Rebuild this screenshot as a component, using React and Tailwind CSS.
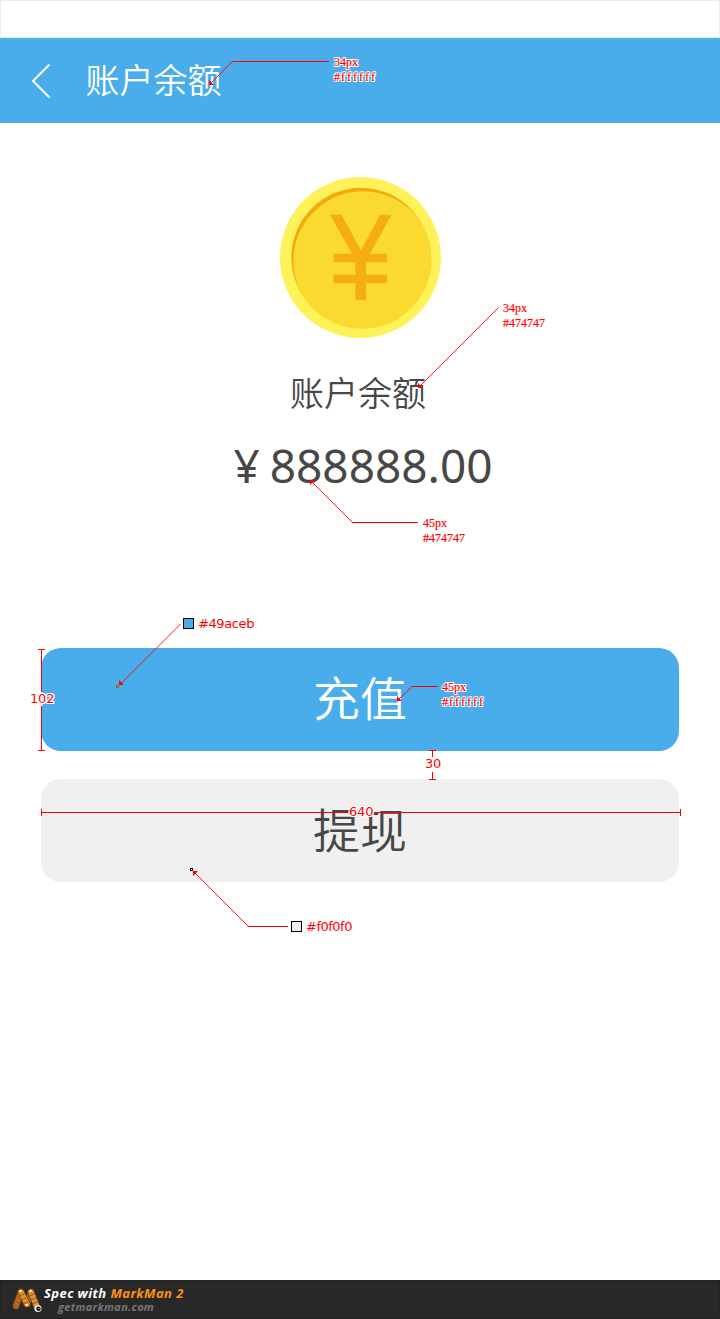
const cjk = "font-['Noto_Sans_CJK_SC',sans-serif] font-[350]";
const note = "absolute whitespace-pre font-['Liberation_Serif',serif] text-[12px] leading-[15px] text-[#ff0000] [-webkit-text-stroke:0.2px_#ff0000]";
const measure = "absolute whitespace-pre font-['DejaVu_Sans',sans-serif] text-[13px] leading-[15px] text-[#ff0000]";
const halo =
  '[text-shadow:1px_0_#fff,-1px_0_#fff,0_1px_#fff,0_-1px_#fff,1px_1px_#fff,-1px_-1px_#fff,1px_-1px_#fff,-1px_1px_#fff]';

function Coin() {
  return (
    <svg className="ml-[2px] h-[162px] w-[162px]" viewBox="0 0 162 162">
      <circle cx="80.500" cy="81.500" r="80.500" fill="#fff258" />
      <circle cx="81" cy="81.400" r="69.600" fill="#f4aa0c" />
      <path d="M20.700 116.200A69.750 69.750 0 0 1 141.300 46.600A69.650 69.650 0 1 1 20.700 116.200Z" fill="#fbda30" />
      <path transform="translate(0 .7)" d="M50 38h11.500L81 73.500 100 38h11.500L90 77h17v8.500H86V98h21v8.500H86V123.500H75.500V106.500H53.500V98h22V85.500H53.500V77h18.500Z" fill="#f4ae12" />
    </svg>
  );
}

function Grub() {
  return (
    <svg className="h-[32px] w-[32px] shrink-0" viewBox="0 0 32 32" fill="none" strokeLinecap="round">
      <path d="M5 22L10 8M16 20L20 8" stroke="#6d3c0c" strokeWidth="7" />
      <path d="M5 22L10 8M16 20L20 8" stroke="#b56c22" strokeWidth="5.500" />
      <path d="M10 8L16 20M20 8L26 23" stroke="#6d3c0c" strokeWidth="7" />
      <path d="M10 8L16 20M20 8L26 23" stroke="#dc9238" strokeWidth="5.500" />
      <path d="M8 12l5-2M10 16l5-2M12 20l5-2M3 17l5 2M2 21l5 2M18 12l5-2M20 16l5-2M21 20l5-2" stroke="#8d4e15" strokeWidth=".9" />
      <path d="M9 7l1 0M19 7l1 0M15 21l1 0" stroke="#fff0a0" strokeWidth="1.800" />
      <circle cx="27" cy="24.500" r="3.500" fill="#eee" />
      <circle cx="27.500" cy="24.800" r="2.200" fill="#111" />
      <circle cx="28" cy="24.300" r=".6" fill="#fff" />
    </svg>
  );
}

function Callouts() {
  return (
    <div className="pointer-events-none absolute inset-0">
      <svg className="absolute inset-0 h-full w-full" viewBox="0 0 720 1319" fill="none">
        <g stroke="#ff0000" strokeWidth="1">
          <path d="M232.500 61.500H329M352 522.500H418M412 686.500H438M248 926.500H288" />
          <path d="M41.500 649V750M38 649.500H45M38 750.500H45" />
          <path d="M432.500 750V779M429 750.500H436M429 779.500H436" />
          <path d="M41 812.500H680M41.500 809V816M680.500 809V816" />
        </g>
        <g stroke="#ff0000" strokeWidth=".9">
          <path d="M210 84L232.500 61.500M419 387L498.500 307.500M312 482L352.500 522.500M398 700L412 686.500M194 872L248.500 926.500" />
          <path d="M180.500 624L121 683.500" />
        </g>
        <g fill="#ff0000">
          <path d="M209 80v5h5zM418 383v5h5zM310 485v-5h5zM397 696v5h5zM119 680v5h5zM193 876v-5h5z" />
        </g>
        <rect x="116.500" y="685.500" width="2" height="2" stroke="#b65314" />
        <rect x="190.500" y="868.500" width="2" height="2" stroke="#000" fill="#fff" />
        <rect x="183.500" y="618.500" width="10" height="10" stroke="#000" fill="#49aceb" />
        <rect x="291.500" y="921.500" width="10" height="10" stroke="#000" fill="#f0f0f0" />
        <path d="M41.500 692V706" stroke="#fff" strokeWidth="2" />
        <path d="M432.500 757V772" stroke="#fff" strokeWidth="2" />
        <path d="M348 812.500H374" stroke="#f0f0f0" strokeWidth="2" />
      </svg>
      <div className={`${note} ${halo} left-[334px] top-[55px]`}>34px<br /><span className="tracking-[1px]">#</span><span className="tracking-[2.2px]">ffffff</span></div>
      <div className={`${note} left-[503px] top-[301px]`}>34px<br />#474747</div>
      <div className={`${note} left-[423px] top-[516px]`}>45px<br />#474747</div>
      <div className={`${note} ${halo} left-[442px] top-[680px]`}>45px<br /><span className="tracking-[1px]">#</span><span className="tracking-[2.2px]">ffffff</span></div>
      <div className={`${measure} left-[198px] top-[616px] tracking-[-0.4px]`}>#49aceb</div>
      <div className={`${measure} left-[306px] top-[919px] tracking-[-0.5px]`}>#f0f0f0</div>
      <div className={`${measure} ${halo} left-[30px] top-[691px] tracking-[-0.2px]`}>102</div>
      <div className={`${measure} ${halo} left-[425px] top-[756px] tracking-[-0.2px]`}>30</div>
      <div className={`${measure} ${halo} left-[349px] top-[804px] tracking-[-0.2px]`}>640</div>
    </div>
  );
}

export default function App() {
  return (
    <div className="relative flex h-[1319px] w-[720px] flex-col overflow-hidden bg-white">
      <div className="h-[38px] shrink-0 border border-[#ececec]" />
      <header className="flex h-[85px] shrink-0 items-center bg-[#49aceb] pl-[31px] text-white">
        <svg className="h-[36px] w-[20px]" viewBox="0 0 20 36" fill="none" stroke="currentColor" strokeWidth="2">
          <path d="M18.500 1.500L2 18L18.500 34.500" />
        </svg>
        <h1 className={`${cjk} mb-[4px] ml-[34.500px] text-[34px] leading-[50px]`}>账户余额</h1>
      </header>
      <main className="flex flex-1 flex-col items-center pt-[53px]">
        <Coin />
        <p className={`${cjk} mt-[29px] -ml-[4px] text-[34px] leading-[50px] text-[#474747]`}>账户余额</p>
        <p className="mt-[16px] ml-[6px] flex h-[64px] items-center gap-[10px] font-['Noto_Sans',sans-serif] text-[46px] leading-[64px] text-[#474747]">
          <span>¥</span>
          <span>888888.00</span>
        </p>
        <button className={`${cjk} mt-[151px] h-[103px] w-[638px] rounded-[20px] bg-[#49aceb] pb-[7px] text-[47px] leading-[60px] text-white`}>充值</button>
        <button className={`${cjk} mt-[28px] h-[103px] w-[638px] rounded-[20px] bg-[#f0f0f0] pb-[6px] text-[47px] leading-[60px] text-[#474747]`}>提现</button>
      </main>
      <footer className="flex h-[39px] shrink-0 items-center border border-[#222] bg-[#282828] pl-[10px]">
        <Grub />
        <div className="ml-[1px] font-['Open_Sans',sans-serif] font-bold italic">
          <p className="whitespace-nowrap text-[13px] leading-[13px] tracking-[0.42px] text-white">Spec with <span className="text-[#ff920a]">MarkMan 2</span></p>
          <p className="ml-[14px] text-[11px] leading-[13px] tracking-[0.3px] text-[#777]">getmarkman.com</p>
        </div>
      </footer>
      <Callouts />
    </div>
  );
}
